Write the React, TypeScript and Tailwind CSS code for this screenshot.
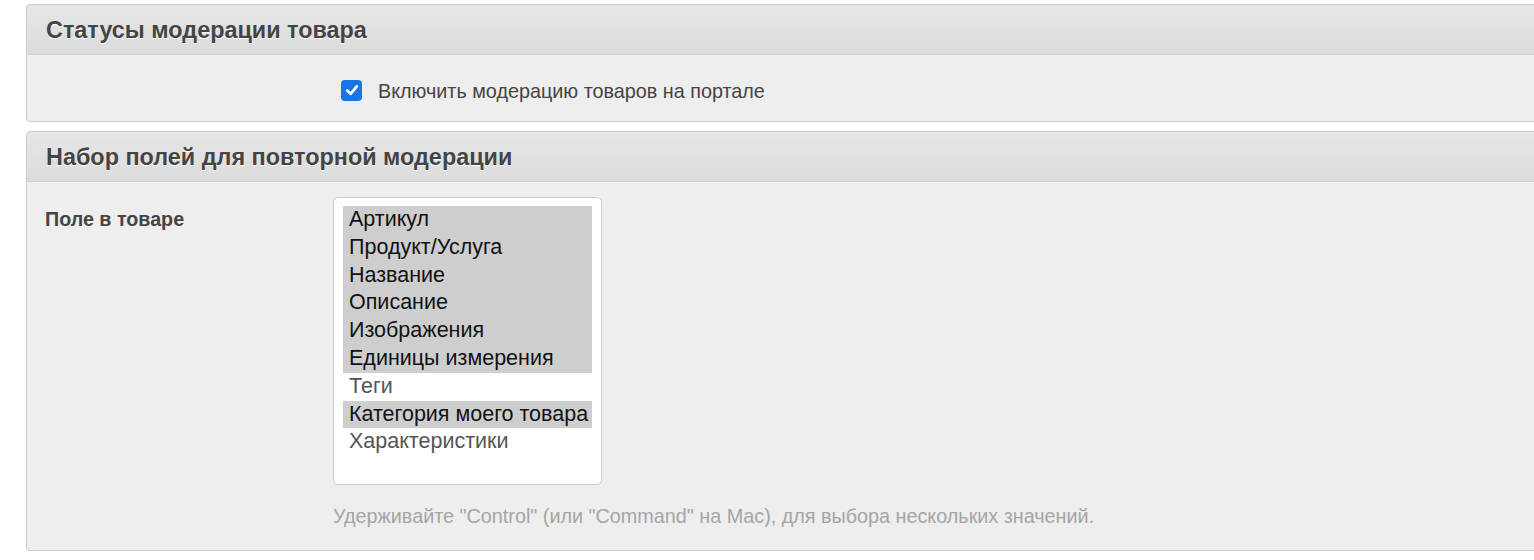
import React from "react";

const options: { label: string; selected: boolean }[] = [
  { label: "Артикул", selected: true },
  { label: "Продукт/Услуга", selected: true },
  { label: "Название", selected: true },
  { label: "Описание", selected: true },
  { label: "Изображения", selected: true },
  { label: "Единицы измерения", selected: true },
  { label: "Теги", selected: false },
  { label: "Категория моего товара", selected: true },
  { label: "Характеристики", selected: false },
];

function Header({ title }: { title: string }) {
  return (
    <div className="h-[50px] flex items-center pl-[19px] pt-[2px] border-b border-[#cfcfcf] bg-gradient-to-b from-[#e6e6e6] to-[#dcdcdc]">
      <h2 className="text-[23.4px] leading-none font-bold text-[#444] [text-shadow:0_1px_0_#fff]">{title}</h2>
    </div>
  );
}

export default function App() {
  return (
    <div
      className="w-[1534px] h-[560px] overflow-hidden bg-white pt-[4px]"
      style={{ fontFamily: '"Liberation Sans", Arial, sans-serif' }}
    >
      <div className="ml-[26px] w-[1540px] border border-[#cccccc] rounded-[4px] bg-[#eeeeee] overflow-hidden">
        <Header title="Статусы модерации товара" />
        <div className="h-[66px] flex items-center pl-[314px] pt-[8px]">
          <span className="w-[21px] h-[21px] rounded-[4px] bg-[#1a73e8] flex items-center justify-center mb-[4px]">
            <svg width="16" height="16" viewBox="0 0 16 16">
              <path d="M3.2 8.6 L6.6 11.8 L12.8 4.4" fill="none" stroke="#fff" strokeWidth="2.8" strokeLinecap="round" strokeLinejoin="round" />
            </svg>
          </span>
          <span className="ml-[16px] text-[19.8px] leading-none text-[#444]">Включить модерацию товаров на портале</span>
        </div>
      </div>

      <div className="mt-[9px] ml-[26px] w-[1540px] h-[420px] border border-[#cccccc] rounded-[4px] bg-[#eeeeee] overflow-hidden">
        <Header title="Набор полей для повторной модерации" />
        <div className="flex pt-[15px]">
          <div className="w-[306px] pl-[18px] pt-[13px] text-[19.7px] leading-none font-bold text-[#444]">Поле в товаре</div>
          <div>
            <div className="w-[269px] h-[288px] bg-white border border-[#cccccc] rounded-[5px] pt-[8px] pl-[9px] pr-[9px]">
              {options.map((o) => (
                <div
                  key={o.label}
                  className={
                    "h-[27.8px] leading-[27.8px] pl-[6px] text-[21.5px] whitespace-nowrap " +
                    (o.selected ? "bg-[#cecece] text-[#111]" : "text-[#555]")
                  }
                >
                  {o.label}
                </div>
              ))}
            </div>
            <div className="mt-[22px] text-[19.8px] leading-none text-[#a5a5a5] whitespace-nowrap">
              Удерживайте "Control" (или "Command" на Mac), для выбора нескольких значений.
            </div>
          </div>
        </div>
      </div>
    </div>
  );
}
